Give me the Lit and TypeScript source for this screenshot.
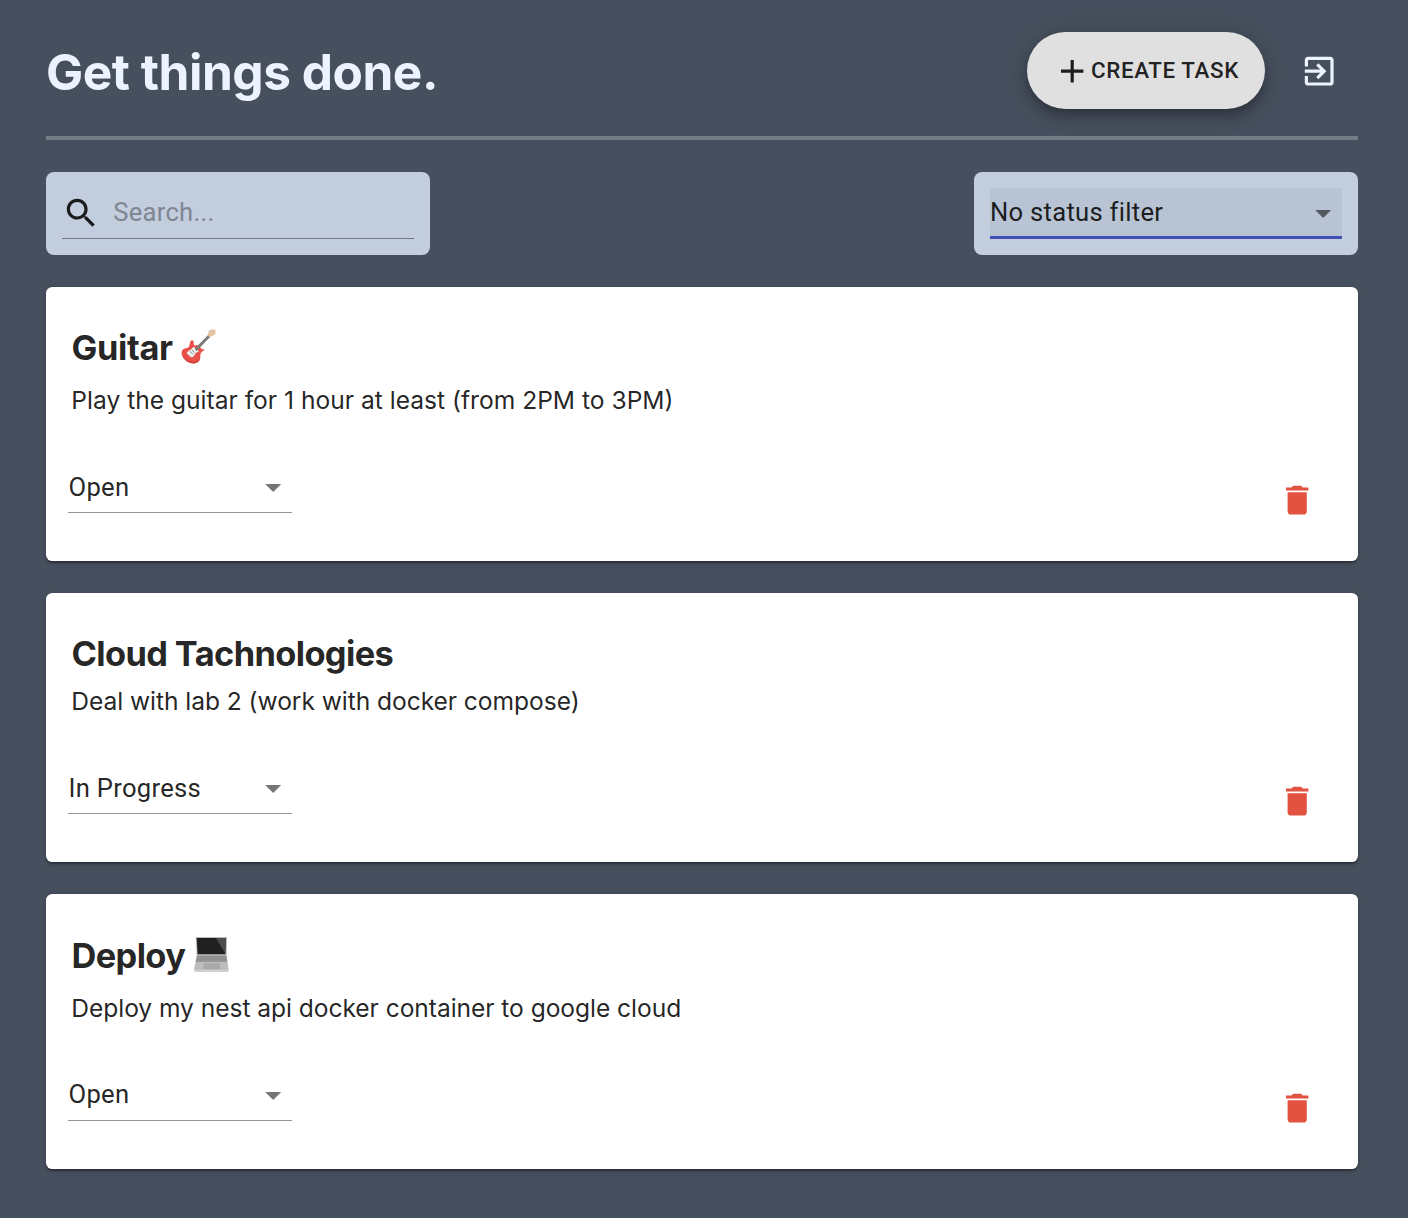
import { LitElement, html, svg, css } from "lit";
import { customElement, property } from "lit/decorators.js";

const ICONS = {
  add: "M19 13h-6v6h-2v-6H5v-2h6V5h2v6h6v2z",
  exit: "M10.09 15.59L11.5 17l5-5-5-5-1.41 1.41L12.67 11H3v2h9.67l-2.58 2.59zM19 3H5c-1.11 0-2 .9-2 2v4h2V5h14v14H5v-4H3v4c0 1.1.89 2 2 2h14c1.1 0 2-.9 2-2V5c0-1.1-.9-2-2-2z",
  search: "M15.5 14h-.79l-.28-.27C15.41 12.59 16 11.11 16 9.5 16 5.91 13.09 3 9.5 3S3 5.91 3 9.5 5.91 16 9.5 16c1.61 0 3.09-.59 4.23-1.57l.27.28v.79l5 4.99L20.49 19l-4.99-5zm-6 0C7.01 14 5 11.99 5 9.5S7.01 5 9.5 5 14 7.01 14 9.5 11.99 14 9.5 14z",
  arrow: "M7 10l5 5 5-5z",
  trash: "M6 19c0 1.1.9 2 2 2h8c1.1 0 2-.9 2-2V7H6v12zM19 4h-3.5l-1-1h-5l-1 1H5v2h14V4z",
};

const icon = (name: keyof typeof ICONS, cls = "") =>
  html`<svg class="icon ${cls}" viewBox="0 0 24 24"><path d=${ICONS[name]}></path></svg>`;

const guitar = svg`
  <path d="M29 36C35 31 39 36 38 42C37 49 41 52 47 47L66 62C70 58 73 60 68 65C58 69 58 76 58 84C58 98 45 105 33 103C18 100 5 88 2 74C1 63 8 58 18 57C27 56 25 44 29 36Z" fill="#ea504a"/>
  <path d="M2 75C8 89 22 99 40 99C48 99 54 94 57 88C56 99 45 105 33 103C18 100 5 89 2 75Z" fill="#cf3f3a"/>
  <path d="M38 53L54 67L44 72C41 79 37 86 30 85L17 73C19 66 28 63 31 60Z" fill="#eceff0"/>
  <path d="M27 67L36 76M32 62L41 71" stroke="#888" stroke-width="3"/>
  <path d="M41 59L82 17L88 23L47 66Z" fill="#777473"/>
  <path d="M47 60L85 21" stroke="#999" stroke-width="1.5"/>
  <path d="M80 17L84 6L94 1L104 3L103 11L96 20L85 24Z" fill="#edc199"/>
  <path d="M82 7L91 3M84 11L96 6M98 18L104 11" stroke="#c7c9ca" stroke-width="3"/>`;

const laptop = svg`
  <path d="M5 0H99L98 55H8Z" fill="#b9b9b9"/>
  <path d="M8 3H96L94 52H11Z" fill="#202020"/>
  <path d="M66 3H96L94 50Z" fill="#4c4c4c"/>
  <path d="M8 54H98L104 99Q104 104 100 104H4Q0 104 0 99Z" fill="#bdbdbd"/>
  <path d="M9 56H97L99 74H6Z" fill="#8a8a8a"/>
  <path d="M9 61H97M8 66H98M7 71H99" stroke="#b0b0b0" stroke-width="1.5" stroke-dasharray="4 2"/>
  <path d="M29 79H77L79 97H27Z" fill="#a9a9a9"/>
  <path d="M1 100H103" stroke="#d6d6d6" stroke-width="3"/>`;

const shared = css`
  .icon { width: 38.4px; height: 38.4px; fill: currentColor; display: block; flex: none; }
  .select {
    box-sizing: border-box; height: 51px; display: flex; align-items: flex-start;
    justify-content: space-between; border-bottom: 1px solid #949494;
    font: 400 25.6px/30px Roboto, sans-serif; letter-spacing: 0.28px; color: rgba(0, 0, 0, 0.87);
  }
  .select .label { padding-top: 9px; }
  .select .arrow { margin-top: 6px; color: rgba(0, 0, 0, 0.54); }
`;

interface Task {
  title: string;
  emoji?: "guitar" | "laptop";
  description: string;
  status: string;
}

@customElement("task-card")
export class TaskCard extends LitElement {
  @property({ attribute: false }) task!: Task;

  static styles = [shared, css`
    :host {
      display: block; box-sizing: border-box; background: #fff; border-radius: 6.4px; padding: 40px 22px 0;
      color: rgba(0, 0, 0, 0.87);
      box-shadow: 0 3.2px 1.6px -1.6px rgba(0,0,0,.2), 0 1.6px 1.6px rgba(0,0,0,.14), 0 1.6px 4.8px rgba(0,0,0,.12);
    }
    .title {
      margin: 0 0 0 3.5px; height: 52px; display: flex; align-items: flex-start; gap: 8.5px;
      font: 700 34.4px/42px Inter, sans-serif; letter-spacing: -0.62px;
    }
    .title.guitar { height: 57px; letter-spacing: -0.35px; gap: 8px; }
    .title.laptop { height: 58px; padding-top: 1px; box-sizing: border-box; }
    .emoji { width: 35px; height: 35px; margin-top: 2.2px; flex: none; }
    .title.laptop .emoji { margin-top: 1.8px; }
    .description {
      margin: 0 0 46px 3.3px; font: 400 24.6px/32px Inter, sans-serif; letter-spacing: -0.06px;
    }
    .title.guitar + .description { letter-spacing: 0; }
    .footer { display: flex; justify-content: space-between; align-items: flex-start; height: 99px; }
    .status { width: 224px; }
    .status .label { padding: 10px 0 0 0.5px; }
    .title.laptop ~ .footer .label { padding-top: 9px; }
    .trash { color: #e25241; margin: 18.5px 19.6px 0 0; }
  `];

  render() {
    const { title, emoji, description, status } = this.task;
    return html`
      <h2 class="title ${emoji ?? ""}">
        <span>${title}</span>
        ${emoji ? html`<svg class="emoji" viewBox="0 0 105 105">${emoji === "guitar" ? guitar : laptop}</svg>` : ""}
      </h2>
      <p class="description">${description}</p>
      <div class="footer">
        <div class="select status"><span class="label">${status}</span>${icon("arrow", "arrow")}</div>
        ${icon("trash", "trash")}
      </div>`;
  }
}

@customElement("app-root")
export class AppRoot extends LitElement {
  static styles = [shared, css`
    :host {
      display: block; box-sizing: border-box; min-height: 1218px; padding: 32px 50px 49px 46px; background: #464f5d;
    }
    .header {
      display: flex; align-items: flex-start; justify-content: space-between; height: 104px;
      border-bottom: 4px solid #767c86;
    }
    .heading {
      margin: 9px 0 0; color: #edf2ff; font: 700 49.6px/62px Inter, sans-serif; letter-spacing: -0.48px;
    }
    .actions { display: flex; align-items: center; }
    .create {
      box-sizing: border-box; width: 238px; height: 77px; padding: 0 0 0 25.6px; border: 0; border-radius: 38.5px;
      display: flex; align-items: center; background: #e0e0e0; color: rgba(0, 0, 0, 0.87);
      font: 500 22.4px/38.4px Roboto, sans-serif; letter-spacing: 0.6px; white-space: nowrap;
      box-shadow: 0 4.8px 8px -1.6px rgba(0,0,0,.2), 0 9.6px 16px rgba(0,0,0,.14), 0 1.6px 28.8px rgba(0,0,0,.12);
    }
    .create .icon { margin-top: 1.5px; }
    .exit { color: #edf2ff; margin: 1px 20px 0 34.6px; }
    .filters { display: flex; justify-content: space-between; padding: 32px 0; }
    .field { box-sizing: border-box; width: 384px; height: 83px; padding: 16px; border-radius: 8px; background: #c2cdde; }
    .search { border-color: #747b87; justify-content: flex-start; gap: 12.8px; }
    .search .icon { margin-top: 6px; }
    .search .label { color: #7f8691; }
    .filter { background: #b8c3d3; border-bottom: 3px solid #3f51b5; }
    .list { display: flex; flex-direction: column; gap: 32px; }
  `];

  private tasks: Task[] = [
    { title: "Guitar", emoji: "guitar", description: "Play the guitar for 1 hour at least (from 2PM to 3PM)", status: "Open" },
    { title: "Cloud Tachnologies", description: "Deal with lab 2 (work with docker compose)", status: "In Progress" },
    { title: "Deploy", emoji: "laptop", description: "Deploy my nest api docker container to google cloud", status: "Open" },
  ];

  render() {
    return html`
      <header class="header">
        <h1 class="heading">Get things done.</h1>
        <div class="actions">
          <button class="create">${icon("add")}<span>CREATE TASK</span></button>
          ${icon("exit", "exit")}
        </div>
      </header>
      <div class="filters">
        <div class="field"><div class="select search">${icon("search")}<span class="label">Search...</span></div></div>
        <div class="field"><div class="select filter"><span class="label">No status filter</span>${icon("arrow", "arrow")}</div></div>
      </div>
      <main class="list">${this.tasks.map((task) => html`<task-card .task=${task}></task-card>`)}</main>`;
  }
}
